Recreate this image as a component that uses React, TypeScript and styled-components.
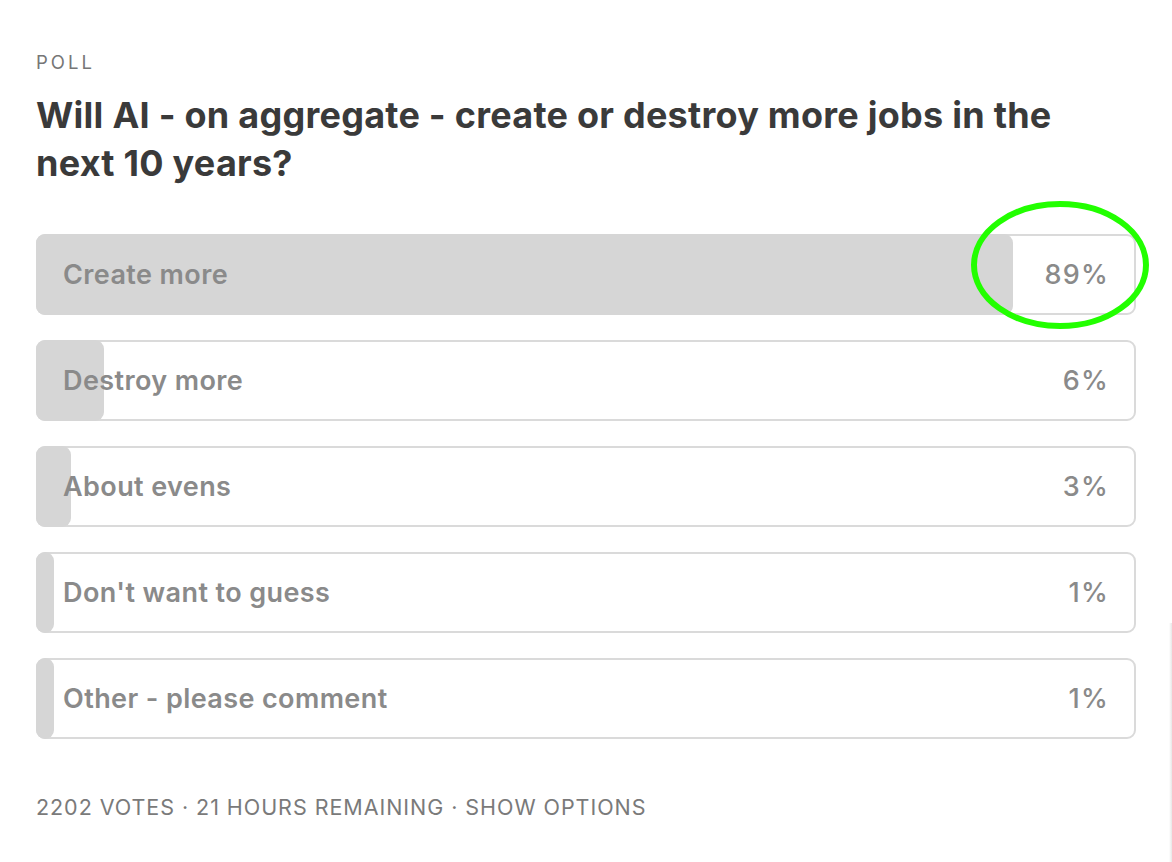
import React from "react";
import styled, { createGlobalStyle } from "styled-components";

const Global = createGlobalStyle`
  html, body { margin: 0; padding: 0; background: #ffffff; }
  body { font-family: Inter, "Noto Sans", sans-serif; -webkit-font-smoothing: antialiased; }
`;

const Page = styled.div`
  width: 1172px;
  height: 862px;
  box-sizing: border-box;
  padding: 50px 36px 0 36px;
  position: relative;
  overflow: hidden;
  display: flex;
  flex-direction: column;
`;

const Kicker = styled.div`
  font-size: 18.5px;
  line-height: 24px;
  letter-spacing: 3px;
  color: #767676;
  font-weight: 400;
`;

const Title = styled.h1`
  margin: 17px 0 0 0;
  font-size: 36px;
  line-height: 48px;
  font-weight: 700;
  color: #3a3a3a;
  letter-spacing: 0.25px;
  max-width: 1070px;
`;

const Options = styled.div`
  margin-top: 47px;
  display: flex;
  flex-direction: column;
  gap: 25px;
  width: 1100px;
  position: relative;
`;

const Option = styled.div`
  height: 81px;
  box-sizing: border-box;
  border: 2px solid #dadada;
  border-radius: 9px;
  display: grid;
  grid-template: 1fr / 1fr;
`;

const Fill = styled.div`
  grid-area: 1 / 1;
  justify-self: start;
  margin: -2px;
  background: #d6d6d6;
  border-radius: 9px;
`;

const Content = styled.div`
  grid-area: 1 / 1;
  display: flex;
  align-items: center;
  justify-content: space-between;
  padding: 0 25px 0 25px;
`;

const Label = styled.span`
  font-size: 27px;
  font-weight: 600;
  letter-spacing: 0.4px;
  color: #8a8a8a;
`;

const Pct = styled.span`
  font-size: 27px;
  font-weight: 500;
  letter-spacing: 1.2px;
  color: #8a8a8a;
`;

const Footer = styled.div`
  margin-top: 55px;
  font-size: 21.5px;
  letter-spacing: 0.95px;
  color: #7a7a7a;
  text-transform: uppercase;
`;

const Circle = styled.svg`
  position: absolute;
  left: 934px;
  top: -33px;
  overflow: visible;
  pointer-events: none;
`;

const EdgeShadow = styled.div`
  position: absolute;
  right: 0;
  top: 623px;
  bottom: 0;
  width: 3px;
  background: linear-gradient(to right, #ffffff, #e6e6e6);
`;

const data = [
  { label: "Create more", pct: "89%", w: 977 },
  { label: "Destroy more", pct: "6%", w: 68 },
  { label: "About evens", pct: "3%", w: 35 },
  { label: "Don't want to guess", pct: "1%", w: 18 },
  { label: "Other - please comment", pct: "1%", w: 18 },
];

export default function App() {
  return (
    <>
      <Global />
      <Page>
        <Kicker>POLL</Kicker>
        <Title>Will AI - on aggregate - create or destroy more jobs in the next 10 years?</Title>
        <Options>
          {data.map((d) => (
            <Option key={d.label}>
              <Fill style={{ width: d.w }} />
              <Content>
                <Label>{d.label}</Label>
                <Pct>{d.pct}</Pct>
              </Content>
            </Option>
          ))}
          <Circle width="180" height="128" viewBox="0 0 180 128">
            <ellipse cx="90" cy="64" rx="86" ry="61" fill="none" stroke="#22ff00" strokeWidth="6" />
          </Circle>
        </Options>
        <Footer>2202 votes · 21 hours remaining · show options</Footer>
        <EdgeShadow />
      </Page>
    </>
  );
}
